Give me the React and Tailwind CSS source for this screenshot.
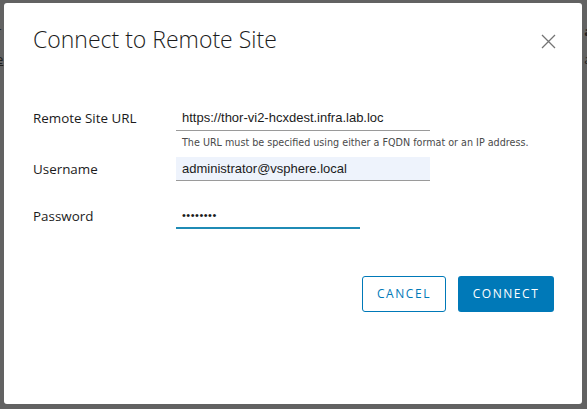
import React from 'react';

const FieldRow = ({ label, children, className = '' }) => (
  <div className={`flex items-center ${className}`}>
    <label className="w-[143px] shrink-0 text-[13.4px] text-[#1b1b1b]">{label}</label>
    {children}
  </div>
);

const App = () => {
  return (
    <div className="relative w-[587px] h-[409px] overflow-hidden bg-[#626262] font-['Open_Sans',sans-serif]">
      {/* page behind the modal backdrop */}
      <div className="flex justify-between pt-[22px] text-[13px] text-[#1e1e1e]">
        <div className="-ml-[4px] flex flex-col gap-[8px]">
          <span>r</span>
          <span className="underline">e</span>
        </div>
        <div className="-mr-[5px] flex flex-col gap-[8px]">
          <span className="font-bold">a</span>
          <span>a</span>
        </div>
      </div>

      <div className="absolute left-[4px] top-[3px] w-[578px] h-[401px] bg-white rounded-[3px] flex flex-col">
        <div className="flex items-start justify-between pl-[29px] pr-[26px] pt-[21px]">
          <h1 className="text-[23px] font-light leading-[31px] text-[#1b1b1b]">
            Connect to Remote Site
          </h1>
          <button className="mt-[10px] text-[#747474]" aria-label="Close">
            <svg width="15" height="15" viewBox="0 0 15 15" fill="none" stroke="currentColor" strokeWidth="1.3">
              <path d="M1 1L14 14M14 1L1 14" />
            </svg>
          </button>
        </div>

        <div className="flex flex-col pl-[29px] mt-[50px]">
          <FieldRow label="Remote Site URL">
            <div className="w-[254px] h-[26px] flex items-center pl-[6px] border-b border-[#9a9a9a] text-[13px] text-[#1b1b1b] font-['Liberation_Sans',sans-serif]">
              https://thor-vi2-hcxdest.infra.lab.loc
            </div>
          </FieldRow>
          <div className="pl-[149px] mt-[6px] text-[9.6px] leading-[12px] text-[#4a4a4a] font-['DejaVu_Sans',sans-serif]">
            The URL must be specified using either a FQDN format or an IP address.
          </div>

          <FieldRow label="Username" className="mt-[8px]">
            <div className="w-[254px] h-[24px] flex items-center pl-[6px] bg-[#eef3fc] border-b border-[#9a9a9a] text-[13px] text-[#1b1b1b] font-['Liberation_Sans',sans-serif]">
              administrator@vsphere.local
            </div>
          </FieldRow>

          <FieldRow label="Password" className="mt-[23px]">
            <div className="w-[184px] h-[25px] flex items-center pl-[6px] border-b-2 border-[#1f8bb5] text-[11px] tracking-[0.5px] text-[#1b1b1b] font-['Liberation_Sans',sans-serif]">
              ••••••••
            </div>
          </FieldRow>
        </div>

        <div className="flex justify-end gap-[12px] pr-[28px] mt-[47px]">
          <button className="w-[84px] h-[36px] rounded-[3px] border border-[#0079b8] bg-white text-[12px] tracking-[0.13em] text-[#0079b8]">
            CANCEL
          </button>
          <button className="w-[96px] h-[36px] rounded-[3px] bg-[#0079b8] text-[12px] tracking-[0.13em] text-white">
            CONNECT
          </button>
        </div>
      </div>
    </div>
  );
};

export default App;
